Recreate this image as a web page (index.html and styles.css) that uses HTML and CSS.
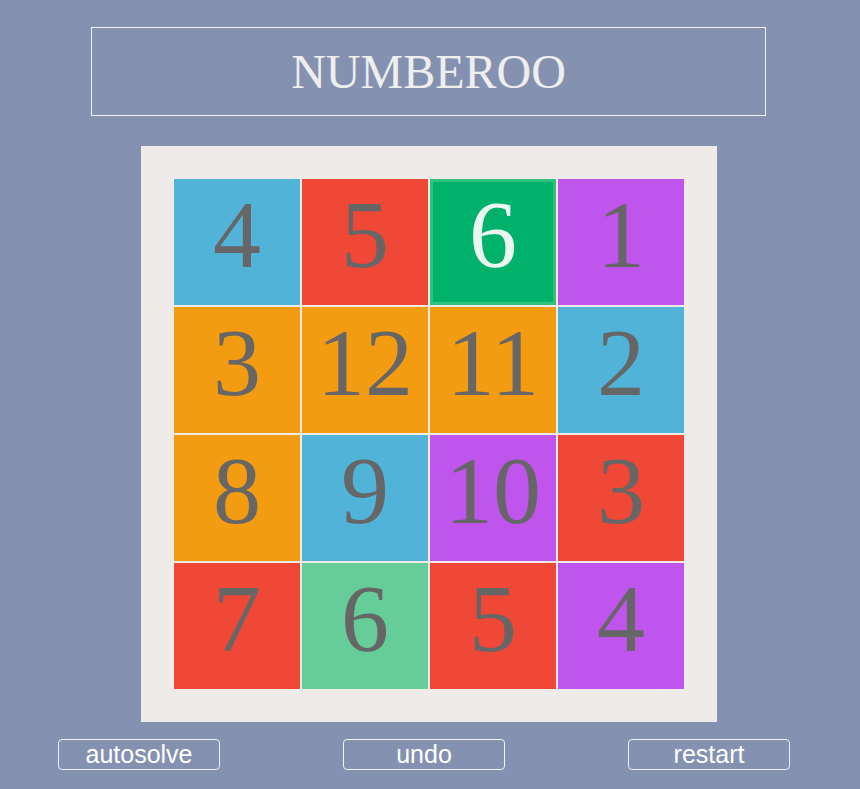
FILE: index.html
```html
<!DOCTYPE html>
<html lang="en">

<head>
    <meta charset="UTF-8">
    <meta name="viewport" content="width=device-width, initial-scale=1.0">
    <title>Numberoo</title>
    <link rel="stylesheet" href="styles.css">
</head>

<body>
    <div class="title">NUMBEROO</div>

    <div class="board">
        <div class="grid">
            <div class="tile blue">4</div>
            <div class="tile red">5</div>
            <div class="tile green selected">6</div>
            <div class="tile purple">1</div>

            <div class="tile orange">3</div>
            <div class="tile orange">12</div>
            <div class="tile orange">11</div>
            <div class="tile blue">2</div>

            <div class="tile orange">8</div>
            <div class="tile blue">9</div>
            <div class="tile purple">10</div>
            <div class="tile red">3</div>

            <div class="tile red">7</div>
            <div class="tile mint">6</div>
            <div class="tile red">5</div>
            <div class="tile purple">4</div>
        </div>
    </div>

    <div class="controls">
        <button>autosolve</button>
        <button>undo</button>
        <button>restart</button>
    </div>
</body>

</html>
```

FILE: styles.css
```css
:root {
    --bg: #8591b0;
    --board: #efebe9;
    --digit: #666666;
    --blue: #52b3d9;
    --red: #ef4836;
    --green: #00b16a;
    --purple: #bf55ec;
    --orange: #f39c12;
    --mint: #66cc99;
}

body {
    margin: 0;
    background-color: var(--bg);
    font-family: "Liberation Serif", serif;
}

.title {
    width: 673px;
    height: 87px;
    margin: 27px 0 0 91px;
    border: 1px solid #f2f2f2;
    color: #eeeeee;
    font-size: 48px;
    line-height: 87px;
    text-align: center;
}

.board {
    width: 512px;
    margin: 30px 0 0 141px;
    padding: 32px;
    background-color: var(--board);
}

.grid {
    display: grid;
    grid-template-columns: repeat(4, 128px);
    grid-auto-rows: 128px;
}

.tile {
    border: 1px solid var(--board);
    color: var(--digit);
    font-size: 96px;
    line-height: 112px;
    text-align: center;
}

.blue { background-color: var(--blue); }
.red { background-color: var(--red); }
.green { background-color: var(--green); }
.purple { background-color: var(--purple); }
.orange { background-color: var(--orange); }
.mint { background-color: var(--mint); }

.selected {
    color: #eaf6f1;
    box-shadow: inset 0 0 0 3px #2ec27e;
}

.controls {
    display: flex;
    justify-content: space-between;
    width: 732px;
    margin: 17px 0 0 58px;
}

button {
    width: 162px;
    height: 31px;
    padding: 0;
    background: transparent;
    border: 1px solid #f2f2f2;
    border-radius: 4px;
    color: #ffffff;
    font-family: "Liberation Sans", Arial, sans-serif;
    font-size: 25px;
    line-height: 29px;
    cursor: pointer;
}
```
